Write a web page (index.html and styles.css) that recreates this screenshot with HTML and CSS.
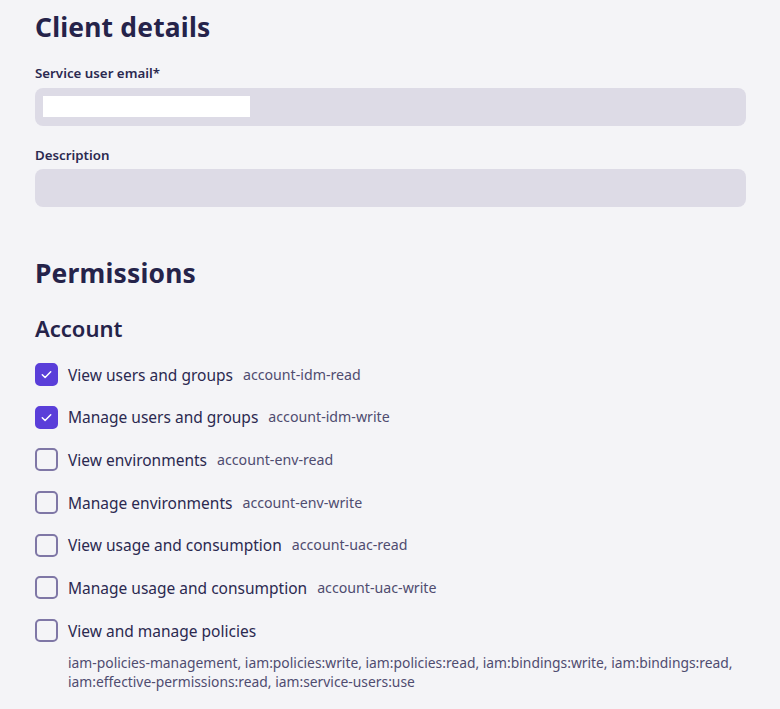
FILE: index.html
```html
<!DOCTYPE html>
<html>
<head>
<meta charset="utf-8">
<link rel="stylesheet" href="styles.css">
</head>
<body>
<main class="page">
  <h1 class="title">Client details</h1>
  <div class="field">
    <label class="label">Service user email*</label>
    <div class="input"><span class="redact"></span></div>
  </div>
  <div class="field">
    <label class="label">Description</label>
    <div class="input"></div>
  </div>
  <h1 class="title perm-title">Permissions</h1>
  <h2 class="subtitle">Account</h2>
  <ul class="list">
    <li class="row"><span class="box checked"><svg viewBox="0 0 16 16" width="15" height="15"><path d="M3.5 8.2l3 3 6-6.2" fill="none" stroke="#fff" stroke-width="1.6" stroke-linecap="round" stroke-linejoin="round"/></svg></span><span class="name">View users and groups</span><span class="code">account-idm-read</span></li>
    <li class="row"><span class="box checked"><svg viewBox="0 0 16 16" width="15" height="15"><path d="M3.5 8.2l3 3 6-6.2" fill="none" stroke="#fff" stroke-width="1.6" stroke-linecap="round" stroke-linejoin="round"/></svg></span><span class="name">Manage users and groups</span><span class="code">account-idm-write</span></li>
    <li class="row"><span class="box"></span><span class="name">View environments</span><span class="code">account-env-read</span></li>
    <li class="row"><span class="box"></span><span class="name">Manage environments</span><span class="code">account-env-write</span></li>
    <li class="row"><span class="box"></span><span class="name">View usage and consumption</span><span class="code">account-uac-read</span></li>
    <li class="row"><span class="box"></span><span class="name">Manage usage and consumption</span><span class="code">account-uac-write</span></li>
    <li class="row"><span class="box"></span><span class="name">View and manage policies</span></li>
  </ul>
  <p class="codes">iam-policies-management, iam:policies:write, iam:policies:read, iam:bindings:write, iam:bindings:read, iam:effective-permissions:read, iam:service-users:use</p>
</main>
</body>
</html>
```
FILE: styles.css
```css
html, body {
  margin: 0;
  padding: 0;
  background: #f4f4f7;
}
body {
  font-family: "Noto Sans", "Open Sans", sans-serif;
  color: #2b2950;
}
.page {
  padding: 8px 34px 0 35px;
}
.title {
  margin: 0;
  font-size: 26.4px;
  font-weight: 700;
  line-height: 38px;
  color: #25234a;
  letter-spacing: 0.2px;
}
.field {
  margin-top: 18px;
}
.field + .field {
  margin-top: 20px;
}
.label {
  display: block;
  font-size: 13.3px;
  font-weight: 600;
  line-height: 18px;
  color: #2b2950;
  margin-bottom: 6px;
}
.field + .field .label {
  margin-bottom: 5px;
}
.input {
  height: 38px;
  border-radius: 8px;
  background: #dddbe6;
  box-sizing: border-box;
  padding: 8px;
}
.redact {
  display: block;
  width: 207px;
  height: 21px;
  background: #ffffff;
}
.perm-title {
  margin-top: 47px;
}
.subtitle {
  margin: 21px 0 0 0;
  font-size: 22px;
  font-weight: 600;
  line-height: 30px;
  color: #25234a;
}
.list {
  list-style: none;
  margin: 20px 0 0 0;
  padding: 0;
}
.row {
  display: flex;
  align-items: center;
  height: 23px;
  margin-bottom: 19.7px;
}
.row:last-child {
  margin-bottom: 0;
}
.box {
  width: 23px;
  height: 23px;
  box-sizing: border-box;
  border: 2px solid #7f77a6;
  border-radius: 5px;
  margin-right: 10px;
  display: flex;
  align-items: center;
  justify-content: center;
  flex: none;
}
.box.checked {
  background: #5a3ed9;
  border-color: #5a3ed9;
}
.name {
  font-size: 15.5px;
  line-height: 20px;
  color: #2b2950;
}
.code {
  margin-left: 10px;
  font-size: 14.2px;
  line-height: 18px;
  color: #4f4c70;
}
.codes {
  margin: 11px 0 0 33px;
  font-size: 13.85px;
  line-height: 19px;
  color: #4f4c70;
}
```
